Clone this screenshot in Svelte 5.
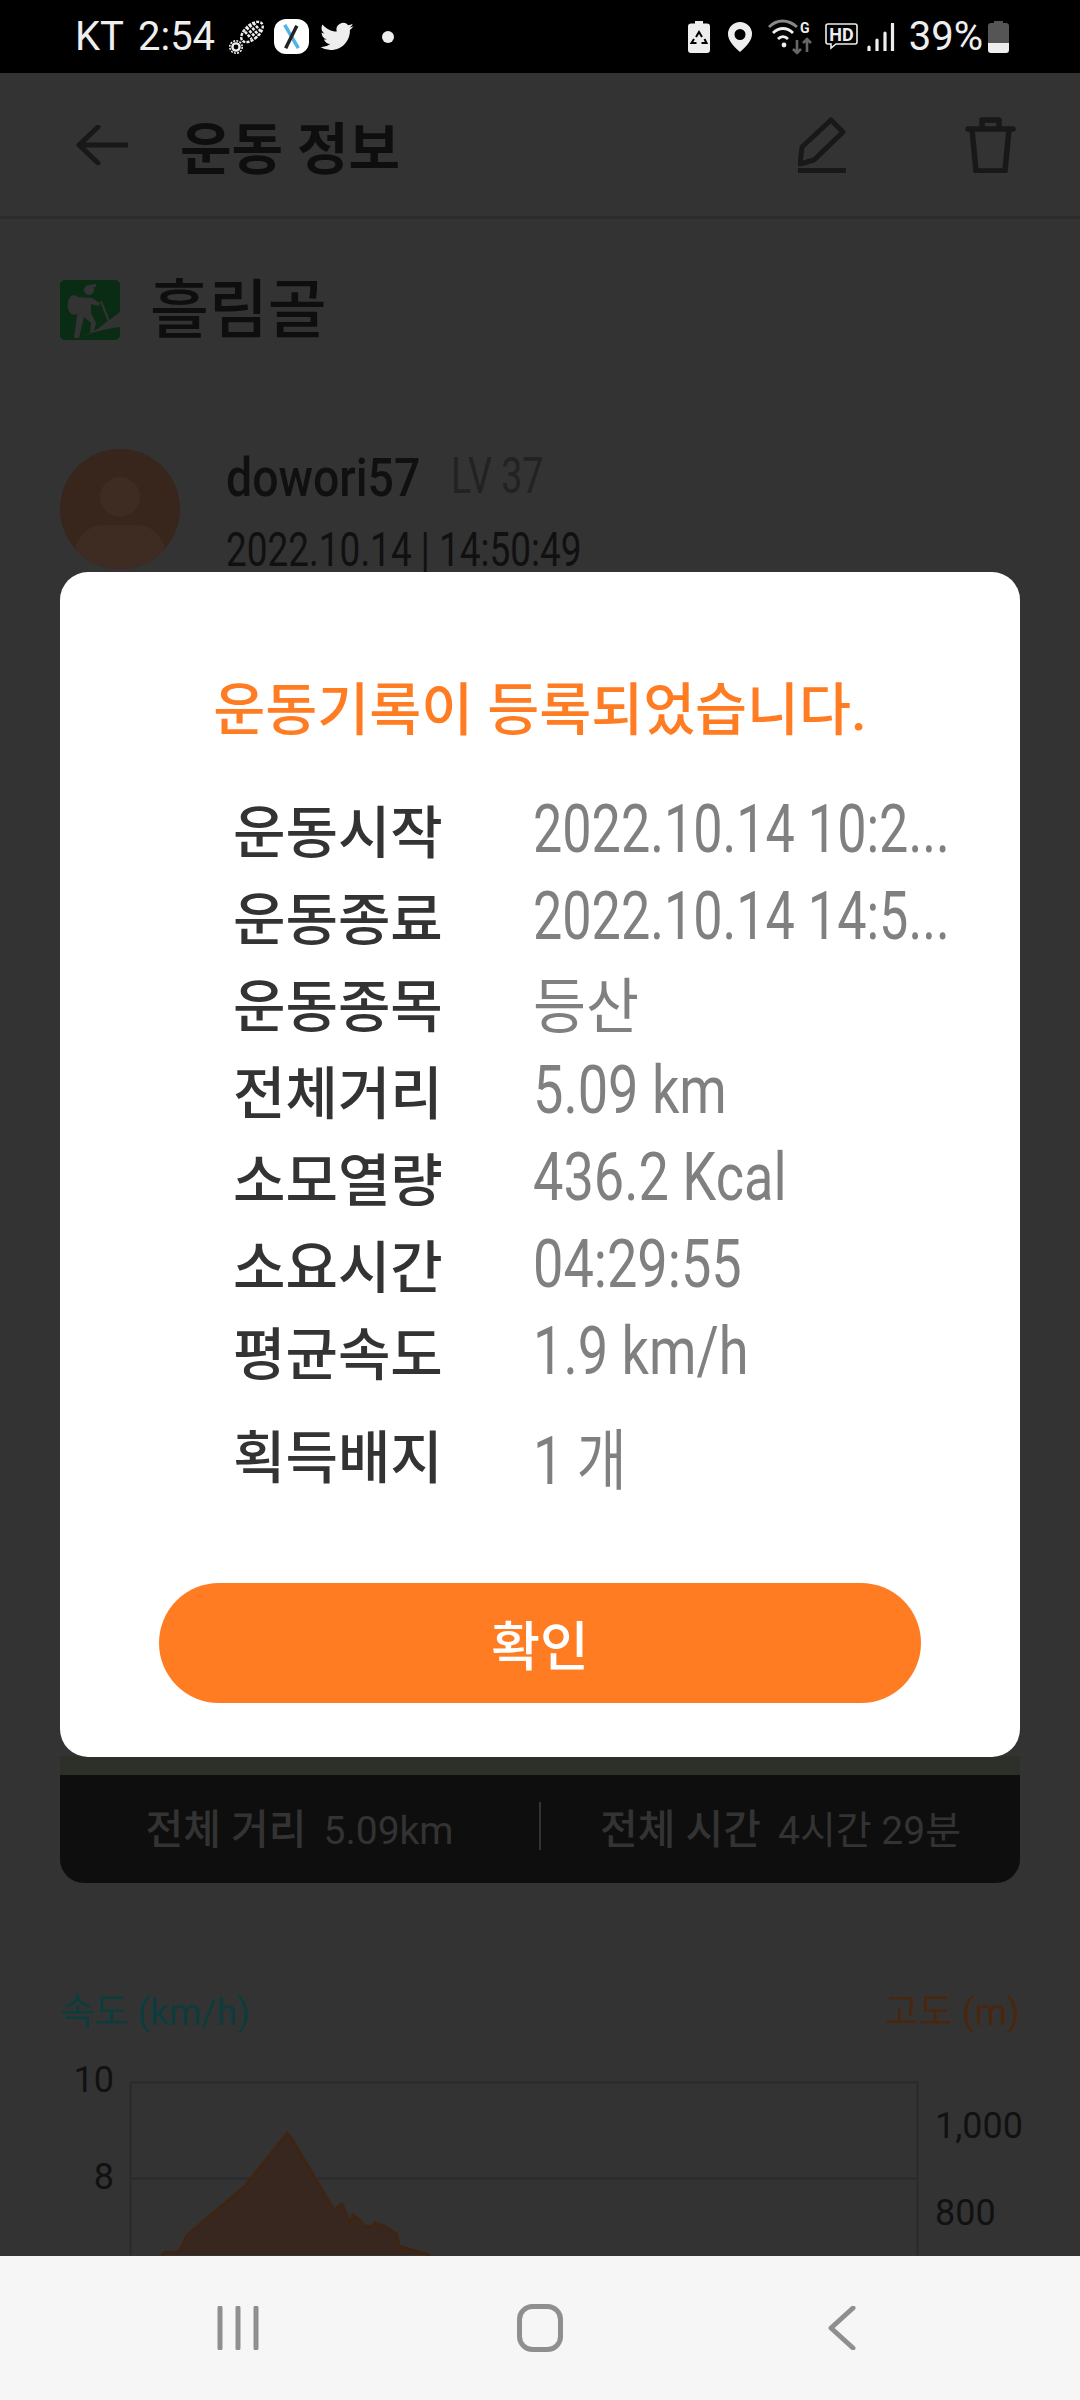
<script lang="ts">
  const rows = [
    { label: "운동시작", value: "2022.10.14 10:2...", kind: "date" },
    { label: "운동종료", value: "2022.10.14 14:5...", kind: "date" },
    { label: "운동종목", value: "등산", kind: "hangul" },
    { label: "전체거리", value: "5.09 km", kind: "" },
    { label: "소모열량", value: "436.2 Kcal", kind: "" },
    { label: "소요시간", value: "04:29:55", kind: "" },
    { label: "평균속도", value: "1.9 km/h", kind: "" },
  ];

  // elevation outline, in page pixels relative to the chart box
  const pts = [
    [162, 176], [165, 173], [177, 173], [180, 171], [187, 156], [245, 107], [287, 54], [292, 60],
    [334, 131], [342, 125], [350, 143], [353, 136], [360, 141], [364, 147], [372, 147], [375, 144],
    [384, 147], [397, 155], [399, 167], [430, 176],
  ];
  const line = pts.map((p) => p.join(",")).join(" ");
</script>

<div class="screen">
  <header class="status">
    <div class="status-left">
      <span class="carrier">KT</span>
      <span class="clock">2:54</span>
      <svg class="shoe" viewBox="0 0 36 36" width="36" height="36">
        <g transform="rotate(48 23 13)">
          <ellipse cx="23" cy="13" rx="7" ry="13" fill="none" stroke="#eee" stroke-width="2.400" stroke-dasharray="3 1.200" />
          <path d="M17 6h12M16 10h14M16 14h14M18 18h10" stroke="#eee" stroke-width="2.600" stroke-dasharray="3 1.200" />
        </g>
        <circle cx="7" cy="28" r="3.600" fill="none" stroke="#eee" stroke-width="2.400" />
        <circle cx="7" cy="28" r="6.200" fill="none" stroke="#eee" stroke-width="1.600" stroke-dasharray="2 1.200" />
      </svg>
      <span class="x-app">
        <svg viewBox="0 0 36 36" width="35" height="35">
          <path d="M11 6l14 24" stroke="#4fb4e6" stroke-width="3.600" />
          <path d="M23.500 7L12 30" stroke="#222" stroke-width="3.600" />
        </svg>
      </span>
      <svg class="bird" viewBox="0 0 24 24" width="36" height="36">
        <path fill="#eee" d="M23 4.900c-.8.400-1.700.6-2.600.7.900-.6 1.700-1.400 2-2.500-.9.500-1.900.9-2.900 1.100A4.500 4.500 0 0 0 11.800 8.400C8 8.200 4.600 6.400 2.300 3.600c-1.200 2.100-.6 4.700 1.400 6-.7 0-1.400-.2-2-.6 0 2.200 1.500 4.100 3.600 4.500-.7.200-1.400.2-2 .1.600 1.800 2.200 3.100 4.200 3.100A9 9 0 0 1 .9 18.600 12.800 12.800 0 0 0 7.800 20.700c8.400 0 13.100-7.100 12.800-13.400.9-.6 1.700-1.500 2.400-2.400z" />
      </svg>
      <span class="dot"></span>
    </div>
    <div class="status-right">
      <svg viewBox="0 0 22 32" width="22" height="32">
        <path fill="#eee" d="M7 0h8v2.500h4a3 3 0 0 1 3 3V29a3 3 0 0 1-3 3H3a3 3 0 0 1-3-3V5.500a3 3 0 0 1 3-3h4z" />
        <path fill="none" stroke="#000" stroke-width="2" d="M8 16l3-5 3 5M16.500 18l2 4h-5M8.500 22h-5l2.500-4" />
      </svg>
      <svg class="pin" viewBox="0 0 24 30" width="24" height="30">
        <path fill="#eee" fill-rule="evenodd" d="M12 0a12 12 0 0 1 12 12c0 6-5 12-12 18C5 24 0 18 0 12A12 12 0 0 1 12 0zm0 7a5.500 5.500 0 1 0 0 11 5.500 5.500 0 0 0 0-11z" />
      </svg>
      <svg class="wifi" viewBox="0 0 46 36" width="46" height="36">
        <path d="M1 8C9 0 20 0 29 8" fill="none" stroke="#888" stroke-width="2.800" />
        <path d="M5 14c6-6 14-6 20 0M10 20c3-3 7-3 10 0" fill="none" stroke="#eee" stroke-width="2.800" />
        <circle cx="16" cy="26" r="2.400" fill="#eee" />
        <path d="M29 21v13m-4-4l4 4 4-4" fill="none" stroke="#666" stroke-width="2.600" />
        <path d="M39 33V20m-4 4l4-4 4 4" fill="none" stroke="#666" stroke-width="2.600" />
        <text x="32" y="14" class="wifi-g">G</text>
      </svg>
      <svg class="hd" viewBox="0 0 33 27" width="33" height="27">
        <path d="M3 1h27a2 2 0 0 1 2 2v16a2 2 0 0 1-2 2H11l-5 4v-4H3a2 2 0 0 1-2-2V3a2 2 0 0 1 2-2z" fill="none" stroke="#eee" stroke-width="1.600" />
        <text x="16.500" y="17.500" text-anchor="middle" class="hd-text">HD</text>
      </svg>
      <svg class="signal" viewBox="0 0 28 28" width="28" height="28">
        <path d="M2 24v4M10 17v11M18 10v18M25.500 1v27" stroke="#eee" stroke-width="3.200" stroke-linecap="round" />
      </svg>
      <span class="pct">39%</span>
      <svg class="batt" viewBox="0 0 21 32" width="21" height="32">
        <path fill="#555" d="M6 0h9v2h3a3 3 0 0 1 3 3v6H0V5a3 3 0 0 1 3-3h3zM0 11h21v11H0z" />
        <path fill="#eee" d="M0 22h21v7a3 3 0 0 1-3 3H3a3 3 0 0 1-3-3z" />
      </svg>
    </div>
  </header>

  <main class="page">
    <div class="appbar">
      <svg class="back" viewBox="0 0 52 40" width="52" height="40">
        <path d="M52 20H3M22 2L3 20l19 18" fill="none" stroke="#181818" stroke-width="5" stroke-linecap="round" stroke-linejoin="round" />
      </svg>
      <h1>운동 정보</h1>
      <svg class="pencil" viewBox="0 0 48 56" width="48" height="56">
        <path d="M2 47l2-17L33 3l12 12-29 28z" fill="none" stroke="#181818" stroke-width="5" stroke-linejoin="round" />
        <path d="M0 53.500h48" stroke="#181818" stroke-width="5" />
      </svg>
      <svg class="trash" viewBox="0 0 51 56" width="51" height="56">
        <path d="M3 12h45M17 12V3h17v9M7 12l4 42h29l4-42" fill="none" stroke="#181818" stroke-width="5.500" stroke-linecap="round" stroke-linejoin="round" />
      </svg>
    </div>

    <div class="course">
      <svg viewBox="0 0 60 60" width="60" height="60">
        <rect width="60" height="60" rx="5" fill="#0a2b14" />
        <g fill="#333">
          <circle cx="29" cy="10" r="5" />
          <path d="M29 5l7-1 0 3-6 1z" />
          <ellipse cx="14" cy="25" rx="6.500" ry="10" />
          <path d="M18 17l14 1 8 5-1 3-8-2v9l5 10-2 9h-4l1-9-7-6-5 21h-5l3-22z" />
          <path d="M40 22l2-1 8 20-2 1z" />
          <path d="M16 60c12-7 28-11 44-13V32L36 50c-6 3-14 6-20 10z" />
        </g>
      </svg>
      <span class="course-name">흘림골</span>
    </div>

    <div class="profile">
      <div class="avatar">
        <span class="head"></span>
        <span class="body"></span>
      </div>
      <div class="who">
        <div class="who-top"><span class="nick">dowori57</span><span class="lv">LV 37</span></div>
        <div class="when">2022.10.14 | 14:50:49</div>
      </div>
    </div>

    <div class="map-strip"></div>
    <div class="summary">
      <div class="sum-cell"><span class="sum-a">전체 거리</span><span class="sum-b">5.09km</span></div>
      <span class="sum-div"></span>
      <div class="sum-cell"><span class="sum-a">전체 시간</span><span class="sum-b">4시간 29분</span></div>
    </div>

    <div class="axis-titles">
      <span class="speed">속도 (km/h)</span>
      <span class="alt">고도 (m)</span>
    </div>

    <svg class="chart" viewBox="0 0 1080 176" width="1080" height="176">
      <path d="M130.500 3.500H917.500V176M130.500 3.500V176M130.500 99.500H917.500" fill="none" stroke="#2a2a2a" stroke-width="2" />
      <polygon points={line} fill="#37271f" />
      <polyline points={line} fill="none" stroke="#40240f" stroke-width="2.500" />
      <text x="114" y="13" text-anchor="end" class="tick">10</text>
      <text x="114" y="110" text-anchor="end" class="tick">8</text>
      <text x="935" y="59" class="tick">1,000</text>
      <text x="935" y="146" class="tick">800</text>
    </svg>

    <div class="overlay">
      <div class="dialog">
        <h2>운동기록이 등록되었습니다.</h2>
        <div class="rows">
          {#each rows as r}
            <div class="row">
              <span class="label">{r.label}</span>
              <span class="value {r.kind}">{r.value}</span>
            </div>
          {/each}
          <div class="row badge">
            <span class="label">획득배지</span>
            <span class="value">1 개</span>
          </div>
        </div>
        <button class="ok">확인</button>
      </div>
    </div>
  </main>

  <nav class="navbar">
    <svg viewBox="0 0 42 44" width="42" height="44">
      <path d="M3 2v40M21 2v40M39 2v40" stroke="#8f8f8f" stroke-width="5" stroke-linecap="round" />
    </svg>
    <svg viewBox="0 0 46 48" width="46" height="48">
      <rect x="2.500" y="2.500" width="41" height="43" rx="13" fill="none" stroke="#8f8f8f" stroke-width="5" />
    </svg>
    <svg viewBox="0 0 28 44" width="28" height="44">
      <path d="M25 2L3 22l22 20" fill="none" stroke="#8f8f8f" stroke-width="5" stroke-linecap="round" stroke-linejoin="round" />
    </svg>
  </nav>
</div>

<style>
  :global(body) {
    margin: 0;
    background: #333;
  }

  .screen {
    width: 1080px;
    height: 2400px;
    display: flex;
    flex-direction: column;
    overflow: hidden;
    font-family: Roboto, "Noto Sans CJK KR", sans-serif;
  }

  /* status bar */
  .status {
    height: 73px;
    flex: none;
    background: #000;
    color: #eee;
    display: flex;
    justify-content: space-between;
    align-items: center;
    padding: 0 71px 0 75px;
    font-size: 40px;
    box-sizing: border-box;
  }

  .status-left,
  .status-right {
    display: flex;
    align-items: center;
  }

  .clock {
    margin-left: 14px;
  }

  .shoe {
    margin-left: 14px;
  }

  .x-app {
    width: 35px;
    height: 35px;
    margin-left: 9px;
    border-radius: 12px;
    background: #fff;
    display: flex;
  }

  .bird {
    margin-left: 10px;
  }

  .dot {
    width: 12px;
    height: 12px;
    border-radius: 50%;
    background: #eee;
    margin-left: 27px;
  }

  .pin {
    margin-left: 18px;
  }

  .wifi {
    margin-left: 16px;
  }

  .wifi-g {
    font-size: 14px;
    font-weight: 700;
    fill: #eee;
  }

  .hd {
    margin-left: 11px;
  }

  .hd-text {
    font-size: 18px;
    font-weight: 700;
    fill: #eee;
  }

  .signal {
    margin-left: 9px;
  }

  .pct {
    margin-left: 14px;
  }

  .batt {
    margin-left: 5px;
  }

  /* dimmed page behind the dialog */
  .page {
    flex: 1;
    min-height: 0;
    position: relative;
    overflow: hidden;
    background: #333;
  }

  .appbar {
    height: 146px;
    box-sizing: border-box;
    border-bottom: 3px solid #2b2b2b;
    display: flex;
    align-items: center;
    padding: 0 64px 0 76px;
  }

  .appbar h1 {
    margin: 0 0 0 52px;
    flex: 1;
    font-size: 56px;
    font-weight: 700;
    color: #0e0e0e;
  }

  .trash {
    margin-left: 119px;
  }

  .course {
    display: flex;
    align-items: center;
    gap: 30px;
    padding: 59px 60px 0;
  }

  .course-name {
    margin-top: 3px;
    font-size: 64px;
    font-weight: 500;
    color: #0e0e0e;
    line-height: 60px;
  }

  .profile {
    display: flex;
    gap: 46px;
    height: 120px;
    margin-top: 108px;
    padding: 0 60px;
  }

  .avatar {
    width: 120px;
    height: 120px;
    border-radius: 50%;
    background: #38261d;
    position: relative;
    overflow: hidden;
    flex: none;
  }

  .head {
    position: absolute;
    left: 40px;
    top: 28px;
    width: 40px;
    height: 40px;
    border-radius: 50%;
    background: #3e2b21;
  }

  .body {
    position: absolute;
    left: 15px;
    top: 76px;
    width: 90px;
    height: 60px;
    border-radius: 28px 28px 0 0;
    background: #3e2b21;
  }

  .who-top {
    margin-top: -3px;
    height: 56px;
    display: flex;
    align-items: baseline;
  }

  .nick {
    font-size: 54px;
    font-weight: 500;
    color: #101010;
    display: inline-block;
    transform: scaleX(0.86);
    transform-origin: left;
    width: 225px;
  }

  .lv {
    font-size: 50px;
    color: #222;
    display: inline-block;
    transform: translateY(-3px) scaleX(0.75);
    transform-origin: left;
  }

  .when {
    margin-top: 20px;
    font-size: 48px;
    line-height: 56px;
    color: #101010;
    white-space: nowrap;
    transform: scaleX(0.77);
    transform-origin: left;
  }

  .map-strip {
    height: 19px;
    margin: 1187px 60px 0;
    background: #2c3028;
  }

  .summary {
    margin: 0 60px;
    height: 108px;
    background: #0e0e0e;
    border-radius: 0 0 24px 24px;
    display: flex;
    align-items: center;
    color: #333;
    padding-bottom: 6px;
    box-sizing: border-box;
  }

  .sum-cell {
    flex: 1;
    display: flex;
    justify-content: center;
    align-items: baseline;
    gap: 17px;
    white-space: nowrap;
  }

  .sum-a {
    font-size: 41px;
    font-weight: 500;
  }

  .sum-b {
    font-size: 39px;
  }

  .sum-div {
    width: 2px;
    height: 48px;
    background: #333;
  }

  .axis-titles {
    display: flex;
    justify-content: space-between;
    margin-top: 105px;
    padding: 0 60px;
    font-size: 37px;
    line-height: 50px;
  }

  .speed {
    color: #0c3c3c;
  }

  .alt {
    color: #4a260f;
  }

  .chart {
    display: block;
    margin-top: 41px;
    overflow: visible;
  }

  .tick {
    font-size: 36px;
    fill: #111;
    font-family: Roboto, sans-serif;
  }

  /* dialog */
  .overlay {
    position: absolute;
    inset: 0;
    display: flex;
    justify-content: center;
    align-items: center;
  }

  .dialog {
    width: 960px;
    height: 1185px;
    box-sizing: border-box;
    background: #fff;
    border-radius: 28px;
    padding-top: 99px;
    display: flex;
    flex-direction: column;
    align-items: center;
  }

  .dialog h2 {
    margin: 0;
    font-size: 56.5px;
    line-height: 80px;
    font-weight: 500;
    color: #ff7c22;
    white-space: nowrap;
  }

  .rows {
    width: 100%;
    margin-top: 33px;
  }

  .row {
    height: 87px;
    display: flex;
    align-items: center;
    padding-left: 173px;
  }

  .row.badge {
    margin-top: 16px;
  }

  .label {
    flex: none;
    width: 300px;
    font-size: 57px;
    font-weight: 500;
    color: #333;
  }

  .value {
    font-size: 66px;
    color: #808080;
    white-space: nowrap;
    transform: translateY(2px) scaleX(0.82);
    transform-origin: left;
  }

  .value.date {
    transform: translateY(2px) scaleX(0.79);
  }

  .value.hangul {
    font-size: 60px;
    transform: scaleX(0.96);
  }

  .ok {
    margin-top: 87px;
    width: 762px;
    height: 120px;
    border: 0;
    border-radius: 60px;
    background: #ff7c22;
    color: #fff;
    font-family: inherit;
    font-size: 53px;
    font-weight: 500;
  }

  .navbar {
    height: 144px;
    flex: none;
    background: #f6f6f6;
    display: grid;
    grid-template-columns: repeat(3, 1fr);
    justify-items: center;
    align-items: center;
    padding: 0 87px;
    box-sizing: border-box;
  }
</style>
